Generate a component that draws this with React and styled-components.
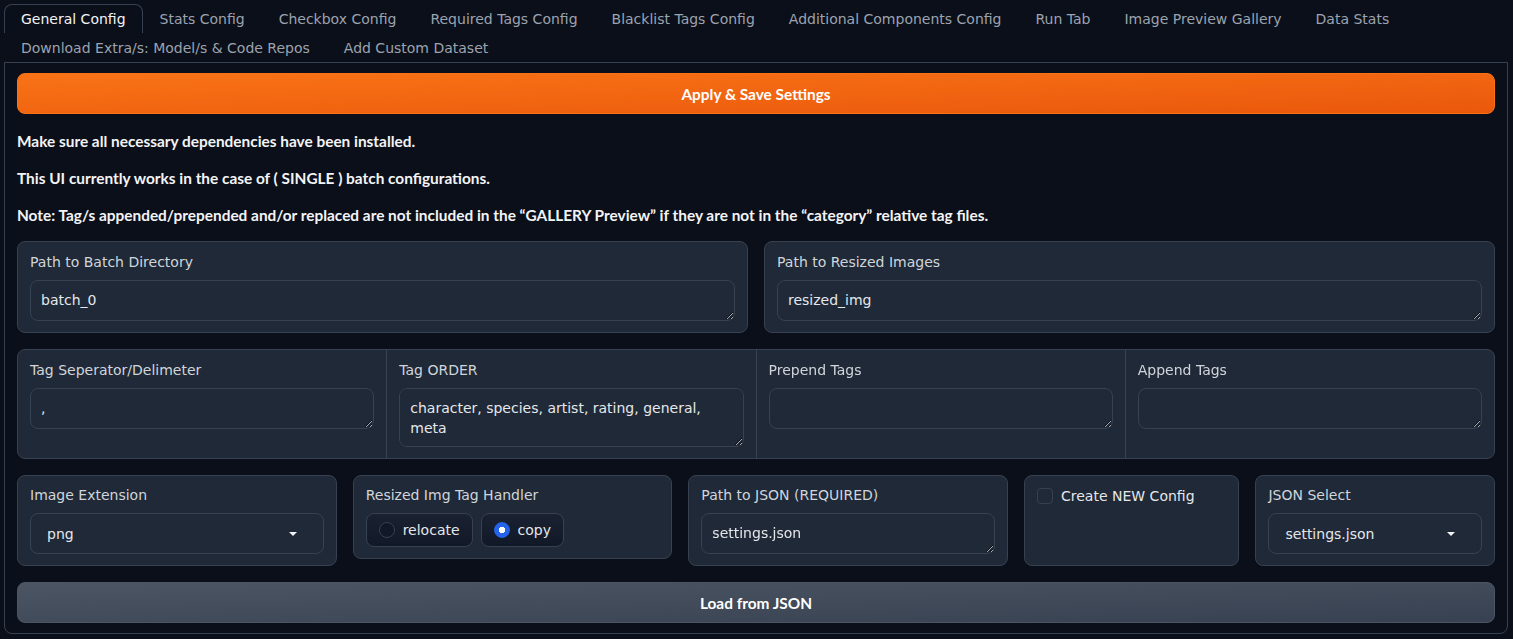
import React from 'react'
import styled, { createGlobalStyle } from 'styled-components'

const GlobalStyle = createGlobalStyle`
    html, body {
        margin: 0;
        padding: 0;
        background: #0b0f19;
        color-scheme: dark;
    }

    body {
        font-family: "DejaVu Sans", sans-serif;
        font-size: 14px;
        color: #e5e7eb;
    }
`

const tabs = [
    "General Config",
    "Stats Config",
    "Checkbox Config",
    "Required Tags Config",
    "Blacklist Tags Config",
    "Additional Components Config",
    "Run Tab",
    "Image Preview Gallery",
    "Data Stats",
    "Download Extra/s: Model/s & Code Repos",
    "Add Custom Dataset",
]

function Arrow() {
    return (
        <svg width="10" height="6" viewBox="0 0 10 6">
            <path d="M1 1 L9 1 L5 5 Z" fill="#f3f4f6" />
        </svg>
    )
}

function Field({ label, value, height, rows = 1 }) {
    return (
        <>
            <Label>{label}</Label>
            <TextArea rows={rows} $height={height} defaultValue={value} />
        </>
    )
}

function Dropdown({ value }) {
    return (
        <Select>
            <span>{value}</span>
            <Arrow />
        </Select>
    )
}

function App() {
    return (
        <Page>
            <GlobalStyle />
            <TabNav>
                {tabs.map((t, i) => (
                    <Tab key={t} $active={i === 0}>{t}</Tab>
                ))}
            </TabNav>

            <Panel>
                <Button $variant="primary">Apply &amp; Save Settings</Button>

                <Prose>
                    <p>Make sure all necessary dependencies have been installed.</p>
                    <p>This UI currently works in the case of ( SINGLE ) batch configurations.</p>
                    <p>Note: Tag/s appended/prepended and/or replaced are not included in the “GALLERY Preview” if they are not in the “category” relative tag files.</p>
                </Prose>

                <Row $cols="1fr 1fr">
                    <Block $padBottom={11}>
                        <Field label="Path to Batch Directory" value="batch_0" />
                    </Block>
                    <Block $padBottom={11}>
                        <Field label="Path to Resized Images" value="resized_img" />
                    </Block>
                </Row>

                <Group>
                    <GroupCell>
                        <Field label="Tag Seperator/Delimeter" value="," />
                    </GroupCell>
                    <GroupCell>
                        <Field label="Tag ORDER" value="character, species, artist, rating, general, meta" rows={2} height={59} />
                    </GroupCell>
                    <GroupCell>
                        <Field label="Prepend Tags" value="" />
                    </GroupCell>
                    <GroupCell>
                        <Field label="Append Tags" value="" />
                    </GroupCell>
                </Group>

                <Row $cols="319fr 319fr 319fr 215fr 239fr">
                    <Block $padTop={9} $padBottom={11}>
                        <Label>Image Extension</Label>
                        <Dropdown value="png" />
                    </Block>
                    <Block $start $padTop={9} $padBottom={11}>
                        <Label>Resized Img Tag Handler</Label>
                        <RadioGroup>
                            <RadioItem>
                                <RadioDot />
                                relocate
                            </RadioItem>
                            <RadioItem>
                                <RadioDot $checked />
                                copy
                            </RadioItem>
                        </RadioGroup>
                    </Block>
                    <Block $padTop={9} $padBottom={11}>
                        <Field label="Path to JSON (REQUIRED)" value="settings.json" />
                    </Block>
                    <Block $padTop={9} $padBottom={11}>
                        <CheckRow>
                            <CheckBox />
                            Create NEW Config
                        </CheckRow>
                    </Block>
                    <Block $padTop={9} $padBottom={11}>
                        <Label>JSON Select</Label>
                        <Dropdown value="settings.json" />
                    </Block>
                </Row>

                <Button $variant="secondary">Load from JSON</Button>
            </Panel>
        </Page>
    )
}

export default App

const Page = styled.div`
    padding: 4px 5px 5px 4px;
`

const TabNav = styled.div`
    display: flex;
    flex-wrap: wrap;
`

const Tab = styled.div`
    box-sizing: border-box;
    height: 29px;
    line-height: 28px;
    padding: 0 16px;
    border: 1px solid ${p => p.$active ? '#374151' : 'transparent'};
    border-bottom: none;
    border-radius: 8px 8px 0 0;
    color: ${p => p.$active ? '#f3f4f6' : '#9ca3af'};
    font-size: 14px;
    white-space: nowrap;
`

const Panel = styled.div`
    border: 1px solid #374151;
    border-radius: 0 0 8px 8px;
    padding: 10px 12px;
    display: flex;
    flex-direction: column;
    gap: 16px;
`

const Button = styled.button`
    height: 41px;
    width: 100%;
    border: 1px solid ${p => p.$variant === 'primary' ? '#f97316' : '#4b5563'};
    border-radius: 8px;
    background: ${p => p.$variant === 'primary'
        ? 'linear-gradient(to bottom right, #f97316, #ea580c)'
        : 'linear-gradient(to bottom right, #4b5563, #374151)'};
    color: #ffffff;
    font-family: Lato, sans-serif;
    font-weight: 700;
    font-size: 15.4px;
    cursor: pointer;
`

const Prose = styled.div`
    font-family: Lato, sans-serif;
    font-weight: 700;
    font-size: 15.4px;
    line-height: 21px;
    color: #f3f4f6;
    padding-top: 1px;
    margin-bottom: -1px;

    p {
        margin: 0;
    }

    p + p {
        margin-top: 16px;
    }
`

const Row = styled.div`
    display: grid;
    grid-template-columns: ${p => p.$cols};
    gap: 16px;
    align-items: stretch;
`

const Block = styled.div`
    background: #1f2937;
    border: 1px solid #374151;
    border-radius: 8px;
    padding: ${p => p.$padTop ?? 10}px 12px ${p => p.$padBottom ?? 10}px;
    align-self: ${p => p.$start ? 'start' : 'stretch'};
    min-width: 0;
`

const Label = styled.div`
    font-size: 14px;
    line-height: 20px;
    color: #d1d5db;
    margin-bottom: 8px;
`

const TextArea = styled.textarea`
    display: block;
    box-sizing: border-box;
    width: 100%;
    height: ${p => p.$height || 41}px;
    padding: 9px 10px 10px;
    background: #1f2937;
    border: 1px solid #374151;
    border-radius: 8px;
    color: #e5e7eb;
    font-family: "DejaVu Sans", sans-serif;
    font-size: 14px;
    line-height: 20px;
    resize: vertical;
    outline: none;
`

const Group = styled.div`
    display: grid;
    grid-template-columns: repeat(4, 1fr);
    gap: 1px;
    background: #374151;
    border: 1px solid #374151;
    border-radius: 8px;
    overflow: hidden;
`

const GroupCell = styled.div`
    background: #1f2937;
    padding: 10px 12px 11px;
    min-width: 0;
`

const Select = styled.div`
    box-sizing: border-box;
    height: 41px;
    display: flex;
    align-items: center;
    justify-content: space-between;
    padding: 0 25px 0 16px;
    border: 1px solid #374151;
    border-radius: 8px;
    color: #e5e7eb;
    font-size: 14px;
`

const RadioGroup = styled.div`
    display: flex;
    gap: 8px;
`

const RadioItem = styled.label`
    box-sizing: border-box;
    height: 34px;
    display: flex;
    align-items: center;
    gap: 8px;
    padding: 0 12px;
    border: 1px solid #374151;
    border-radius: 8px;
    background: linear-gradient(to bottom, #1a2231, #111827);
    color: #e5e7eb;
    font-size: 14px;
`

const RadioDot = styled.span`
    box-sizing: border-box;
    width: 16px;
    height: 16px;
    border-radius: 50%;
    border: 1px solid ${p => p.$checked ? '#2563eb' : '#374151'};
    background: ${p => p.$checked
        ? 'radial-gradient(circle, #ffffff 0 3px, #2563eb 3.5px)'
        : '#111827'};
`

const CheckRow = styled.label`
    display: flex;
    align-items: center;
    gap: 8px;
    height: 22px;
    color: #e5e7eb;
    font-size: 14px;
`

const CheckBox = styled.span`
    box-sizing: border-box;
    width: 16px;
    height: 16px;
    border: 1px solid #374151;
    border-radius: 4px;
    background: #1f2937;
`
